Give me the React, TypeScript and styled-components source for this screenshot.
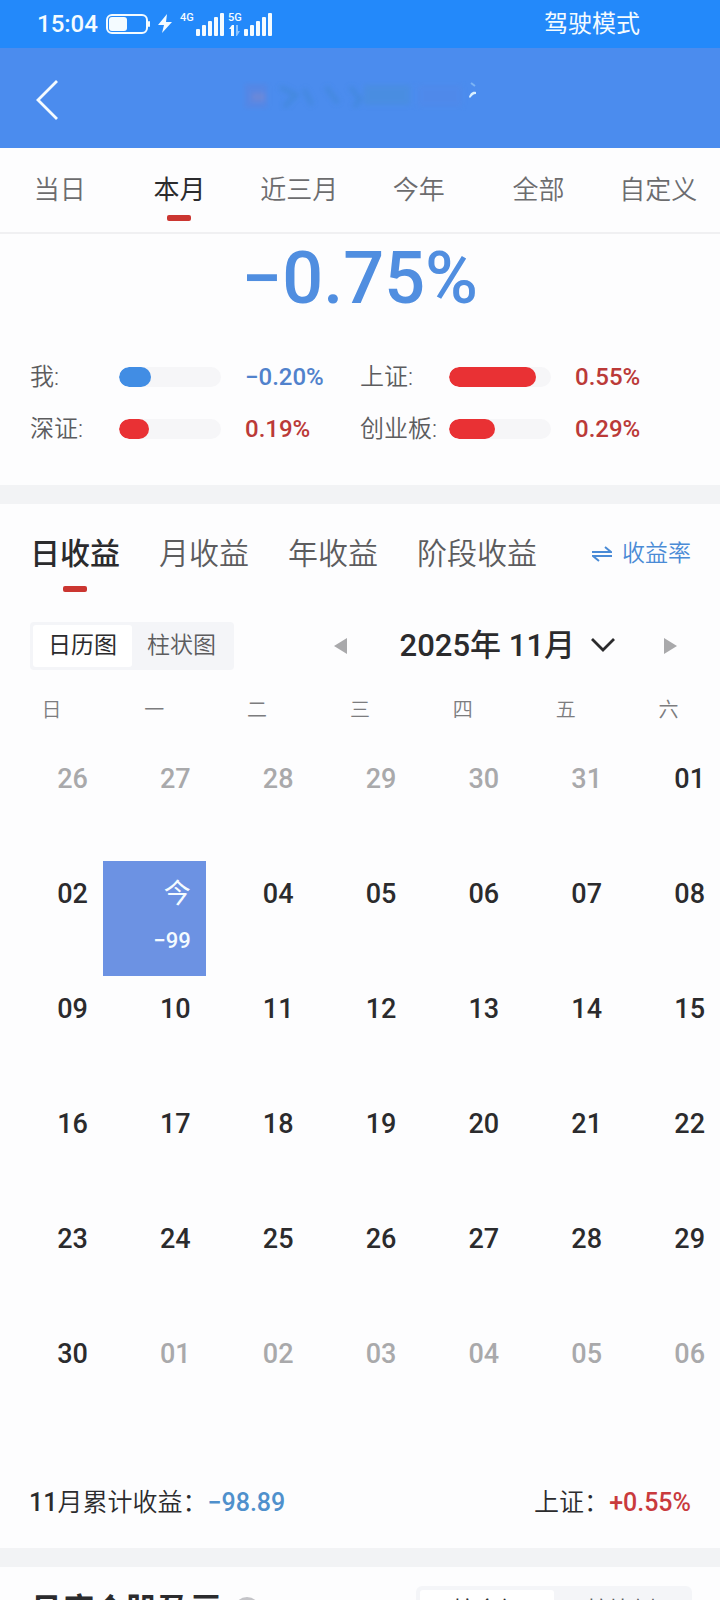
import React from "react";
import styled, { createGlobalStyle } from "styled-components";

const GlobalStyle = createGlobalStyle`
  *, *::before, *::after { box-sizing: border-box; }
  body {
    margin: 0;
    background: #fdfdfe;
    color: #2b2b2d;
    font-family: Roboto, "Noto Sans CJK SC", sans-serif;
    font-size: 24px;
  }
  button {
    margin: 0;
    padding: 0;
    border: 0;
    background: none;
    color: inherit;
    font: inherit;
    cursor: pointer;
  }
  h1, h2, p { margin: 0; }
`;

const Screen = styled.div`
  display: flex;
  flex-direction: column;
  height: 100vh;
  overflow: hidden;
`;

const StatusBar = styled.div`
  flex: none;
  display: flex;
  align-items: center;
  justify-content: space-between;
  height: 48px;
  padding: 0 80px 0 37px;
  background: #2389fa;
  color: #f4fbff;
  line-height: 32px;
`;

const StatusGroup = styled.div`
  display: flex;
  align-items: center;
  gap: 8px;
  font-weight: 500;
`;

const Mode = styled.span`
  font-weight: 400;
`;

const NavBar = styled.header`
  flex: none;
  display: flex;
  align-items: center;
  height: 100px;
  padding: 0 32px;
  background: #4b8cee;
`;

const BackButton = styled.button`
  display: flex;
  width: 32px;
  height: 48px;
  align-items: center;
`;

const NavTitle = styled.div`
  flex: 1;
  display: flex;
  justify-content: center;
  padding: 0 32px 4px 0;
`;

const Content = styled.main`
  flex: 1;
  min-height: 0;
  overflow: hidden;
`;

const RangeTabs = styled.nav`
  display: grid;
  grid-template-columns: repeat(6, 1fr);
  height: 86px;
  padding-right: 2px;
  border-bottom: 2px solid #f0f0f2;
`;

const RangeTab = styled.button<{ $active?: boolean }>`
  display: flex;
  flex-direction: column;
  align-items: center;
  gap: 6px;
  padding-top: 23px;
  font-size: 26px;
  font-weight: ${(p) => (p.$active ? 400 : 350)};
  line-height: 38px;
  color: ${(p) => (p.$active ? "#2b2b2d" : "#6c6c6e")};
`;

const Marker = styled.span`
  width: 24px;
  height: 6px;
  border-radius: 2px;
  background: #cb3631;
`;

const Summary = styled.section`
  padding: 0 30px 38px;
`;

const Total = styled.p`
  height: 125px;
  padding-top: 9px;
  text-align: center;
  font-size: 72px;
  font-weight: 500;
  line-height: 72px;
  color: #508ee0;
`;

const StatGrid = styled.div`
  display: grid;
  grid-template-columns: repeat(2, 1fr);
  row-gap: 16px;
`;

const Stat = styled.div`
  display: grid;
  grid-template-columns: 89px 102px 1fr;
  align-items: center;
  line-height: 36px;
  font-weight: 350;
  color: #5c5c5e;
  white-space: nowrap;
`;

const Track = styled.span`
  height: 20px;
  border-radius: 10px;
  background: #f6f6f8;
  overflow: hidden;
`;

const Fill = styled.span<{ $down?: boolean }>`
  display: block;
  height: 100%;
  border-radius: 10px;
  background: ${(p) => (p.$down ? "#418de4" : "#e93134")};
`;

const StatValue = styled.span<{ $down?: boolean }>`
  padding-left: 24px;
  font-weight: 500;
  color: ${(p) => (p.$down ? "#5182cc" : "#bb3a38")};
`;

const Divider = styled.div`
  height: 19px;
  background: #f2f3f5;
`;

const TabRow = styled.div`
  display: flex;
  justify-content: space-between;
  align-items: flex-start;
  padding: 28px 29px 0 30px;
`;

const ProfitTabs = styled.nav`
  display: flex;
  gap: 39px;
`;

const ProfitTab = styled.button<{ $active?: boolean }>`
  display: flex;
  flex-direction: column;
  align-items: center;
  gap: 10px;
  height: 60px;
  font-size: 30px;
  font-weight: ${(p) => (p.$active ? 500 : 350)};
  line-height: 44px;
  color: ${(p) => (p.$active ? "#2b2b2d" : "#5c5c5e")};
`;

const RateButton = styled.button`
  display: flex;
  align-items: center;
  gap: 10px;
  font-size: 23px;
  font-weight: 350;
  line-height: 44px;
  color: #4a8bd6;
`;

const ToolRow = styled.div`
  display: flex;
  justify-content: space-between;
  align-items: center;
  padding: 30px 43px 0 30px;
`;

const Segmented = styled.div`
  display: flex;
  padding: 3px;
  border-radius: 4px;
  background: #f4f5f8;
`;

const Segment = styled.button<{ $active?: boolean }>`
  width: 99px;
  height: 42px;
  border-radius: 3px;
  background: ${(p) => (p.$active ? "#fff" : "transparent")};
  font-size: 23px;
  font-weight: ${(p) => (p.$active ? 400 : 350)};
  line-height: 40px;
  color: ${(p) => (p.$active ? "#2b2b2d" : "#5c5c5e")};
`;

const MonthNav = styled.div`
  display: flex;
  align-items: center;
`;

const ArrowButton = styled.button`
  display: flex;
`;

const MonthButton = styled.button`
  display: flex;
  align-items: center;
  gap: 16px;
  margin: 0 49px 0 53px;
  font-size: 31px;
  font-weight: 500;
  line-height: 44px;
`;

const Calendar = styled.table`
  width: 100%;
  margin-top: 20px;
  border-collapse: collapse;
  table-layout: fixed;
`;

const Weekday = styled.th`
  height: 56px;
  padding: 0 0 16px;
  font-size: 20px;
  font-weight: 350;
  line-height: 40px;
  color: #7c7c7e;
`;

const Day = styled.td<{ $muted?: boolean; $today?: boolean }>`
  height: 115px;
  padding: 15px 15px 0 0;
  vertical-align: top;
  text-align: right;
  font-size: 27px;
  font-weight: ${(p) => (p.$today ? 400 : 500)};
  line-height: 36px;
  color: ${(p) => (p.$today ? "#f4fbff" : p.$muted ? "#a9a9ab" : "#2b2b2d")};
  background: ${(p) => (p.$today ? "#6c92e3" : "transparent")};
`;

const DayProfit = styled.span`
  display: block;
  padding-top: 11px;
  font-size: 22px;
  font-weight: 500;
`;

const Totals = styled.div`
  display: flex;
  justify-content: space-between;
  padding: 49px 29px 27px;
  font-size: 25px;
  font-weight: 350;
  line-height: 36px;
`;

const Amount = styled.span<{ $down?: boolean }>`
  font-weight: 500;
  color: ${(p) => (p.$down ? "#4f90cc" : "#c93a3d")};
`;

const Strong = styled.span`
  font-weight: 500;
`;

const StockHeader = styled.section`
  display: flex;
  justify-content: space-between;
  align-items: flex-start;
  padding: 19px 28px 0 30px;
`;

const StockTitle = styled.h2`
  display: flex;
  align-items: center;
  gap: 12px;
  padding-top: 2px;
  font-size: 32px;
  font-weight: 700;
  line-height: 44px;
`;

const WideSegmented = styled(Segmented)`
  padding: 4px;
  border-radius: 6px;
`;

const WideSegment = styled(Segment)`
  width: 134px;
  line-height: 38px;
`;

const SignalBars = () => (
  <svg width="28" height="24" viewBox="0 0 28 24" fill="#f4fbff" aria-hidden="true">
    <rect x="0" y="17" width="4" height="7" rx="1" />
    <rect x="6" y="13" width="4" height="11" rx="1" />
    <rect x="12" y="9" width="4" height="15" rx="1" />
    <rect x="18" y="5" width="4" height="19" rx="1" />
    <rect x="24" y="1" width="4" height="23" rx="1" />
  </svg>
);

const Network = styled.div`
  display: flex;
  gap: 2px;
  margin-right: -4px;
`;

const NetworkLabel = styled.span`
  display: flex;
  flex-direction: column;
  width: 14px;
  gap: 2px;
  font-size: 11px;
  line-height: 11px;
`;

type Index = { name: string; value: string; share: number; down?: boolean };
const indexes: Index[] = [
  { name: "我:", value: "−0.20%", share: 31, down: true },
  { name: "上证:", value: "0.55%", share: 85 },
  { name: "深证:", value: "0.19%", share: 29 },
  { name: "创业板:", value: "0.29%", share: 45 },
];

const ranges = ["当日", "本月", "近三月", "今年", "全部", "自定义"];
const profits = ["日收益", "月收益", "年收益", "阶段收益"];
const weekdays = ["日", "一", "二", "三", "四", "五", "六"];

const firstDay = new Date(2025, 9, 26);
const weeks = Array.from({ length: 6 }, (_, w) =>
  Array.from({ length: 7 }, (_, d) => {
    const date = new Date(firstDay);
    date.setDate(firstDay.getDate() + w * 7 + d);
    return date;
  })
);

export default function App() {
  return (
    <Screen>
      <GlobalStyle />
      <StatusBar>
        <StatusGroup>
          <span>15:04</span>
          <svg width="44" height="20" viewBox="0 0 44 20" aria-hidden="true">
            <rect x="1" y="1" width="40" height="18" rx="5" fill="none" stroke="#f4fbff" strokeWidth="2" />
            <rect x="3" y="3" width="18" height="14" rx="3" fill="#f4fbff" />
            <rect x="42" y="7" width="2" height="6" rx="1" fill="#f4fbff" />
          </svg>
          <svg width="14" height="20" viewBox="0 0 14 20" aria-hidden="true">
            <path d="M9 0 0 11h6L4 19 14 8H8z" fill="#f4fbff" />
          </svg>
          <Network>
            <NetworkLabel>4G</NetworkLabel>
            <SignalBars />
          </Network>
          <Network>
            <NetworkLabel>
              5G
              <svg width="14" height="11" viewBox="0 0 14 11" aria-hidden="true">
                <path d="M1 4 4 0h2v11H3V4z" fill="#f4fbff" />
                <path d="M8 0h2v6h2l-3 5H8z" fill="#8cc4ff" />
              </svg>
            </NetworkLabel>
            <SignalBars />
          </Network>
        </StatusGroup>
        <Mode>驾驶模式</Mode>
      </StatusBar>

      <NavBar>
        <BackButton aria-label="返回">
          <svg width="28" height="44" viewBox="0 0 28 44" aria-hidden="true">
            <path d="M25 5 6 24l19 19" fill="none" stroke="#f4fbff" strokeWidth="2.8" />
          </svg>
        </BackButton>
        <NavTitle>
          <svg width="236" height="34" viewBox="0 0 236 34" aria-hidden="true">
            <defs>
              <filter id="haze">
                <feGaussianBlur stdDeviation="2.4" />
              </filter>
            </defs>
            <g filter="url(#haze)" opacity="0.5">
              <rect x="3" y="5" width="22" height="24" fill="#5f82dc" />
              <rect x="10" y="14" width="13" height="8" fill="#8a86c4" />
              <path d="M38 8l16 8-12 12M62 10l8 16M84 8l12 16M108 8l10 12-6 8" stroke="#3e86d0" strokeWidth="5" fill="none" />
              <rect x="122" y="6" width="46" height="20" fill="#4a8fd6" />
              <rect x="176" y="6" width="44" height="22" fill="#5288e8" />
            </g>
            <path d="M227 18c1-3 3-6 7-5v2c-3 0-4 2-6 4z" fill="#d9f0ff" />
            <path d="M229 4l4 3" stroke="#7cb4f4" strokeWidth="2" />
          </svg>
        </NavTitle>
      </NavBar>

      <Content>
        <RangeTabs>
          {ranges.map((r, i) => (
            <RangeTab key={r} $active={i === 1}>
              {r}
              {i === 1 && <Marker />}
            </RangeTab>
          ))}
        </RangeTabs>

        <Summary>
          <Total>−0.75%</Total>
          <StatGrid>
            {indexes.map((x) => (
              <Stat key={x.name}>
                <span>{x.name}</span>
                <Track>
                  <Fill $down={x.down} style={{ width: `${x.share}%` }} />
                </Track>
                <StatValue $down={x.down}>{x.value}</StatValue>
              </Stat>
            ))}
          </StatGrid>
        </Summary>

        <Divider />

        <TabRow>
          <ProfitTabs>
            {profits.map((p, i) => (
              <ProfitTab key={p} $active={i === 0}>
                {p}
                {i === 0 && <Marker />}
              </ProfitTab>
            ))}
          </ProfitTabs>
          <RateButton>
            <svg width="20" height="16" viewBox="0 0 20 16" fill="none" stroke="#4a8bd6" strokeWidth="2" aria-hidden="true">
              <path d="M0 6h19L13 1M20 10H1l6 5" />
            </svg>
            收益率
          </RateButton>
        </TabRow>

        <ToolRow>
          <Segmented>
            <Segment $active>日历图</Segment>
            <Segment>柱状图</Segment>
          </Segmented>
          <MonthNav>
            <ArrowButton aria-label="上个月">
              <svg width="13" height="18" viewBox="0 0 13 18" aria-hidden="true">
                <path d="M13 1v16L0 9z" fill="#a9a9ab" />
              </svg>
            </ArrowButton>
            <MonthButton>
              2025年 11月
              <svg width="24" height="16" viewBox="0 0 24 16" aria-hidden="true">
                <path d="M1 1l11 11L23 1" fill="none" stroke="#2b2b2d" strokeWidth="2.8" />
              </svg>
            </MonthButton>
            <ArrowButton aria-label="下个月">
              <svg width="13" height="18" viewBox="0 0 13 18" aria-hidden="true">
                <path d="M0 1v16l13-8z" fill="#a9a9ab" />
              </svg>
            </ArrowButton>
          </MonthNav>
        </ToolRow>

        <Calendar>
          <thead>
            <tr>
              {weekdays.map((w) => (
                <Weekday key={w} scope="col">
                  {w}
                </Weekday>
              ))}
            </tr>
          </thead>
          <tbody>
            {weeks.map((week, i) => (
              <tr key={i}>
                {week.map((date) => {
                  const inMonth = date.getMonth() === 10;
                  const today = inMonth && date.getDate() === 3;
                  return (
                    <Day key={date.getTime()} $muted={!inMonth} $today={today}>
                      {today ? "今" : String(date.getDate()).padStart(2, "0")}
                      {today && <DayProfit>−99</DayProfit>}
                    </Day>
                  );
                })}
              </tr>
            ))}
          </tbody>
        </Calendar>

        <Totals>
          <span>
            <Strong>11</Strong>月累计收益：<Amount $down>−98.89</Amount>
          </span>
          <span>
            上证：<Amount>+0.55%</Amount>
          </span>
        </Totals>

        <Divider />

        <StockHeader>
          <StockTitle>
            月度个股盈亏
            <svg width="26" height="26" viewBox="0 0 26 26" aria-hidden="true">
              <circle cx="13" cy="13" r="13" fill="#c4c4c8" />
            </svg>
          </StockTitle>
          <WideSegmented>
            <WideSegment $active>按金额</WideSegment>
            <WideSegment>按比例</WideSegment>
          </WideSegmented>
        </StockHeader>
      </Content>
    </Screen>
  );
}
